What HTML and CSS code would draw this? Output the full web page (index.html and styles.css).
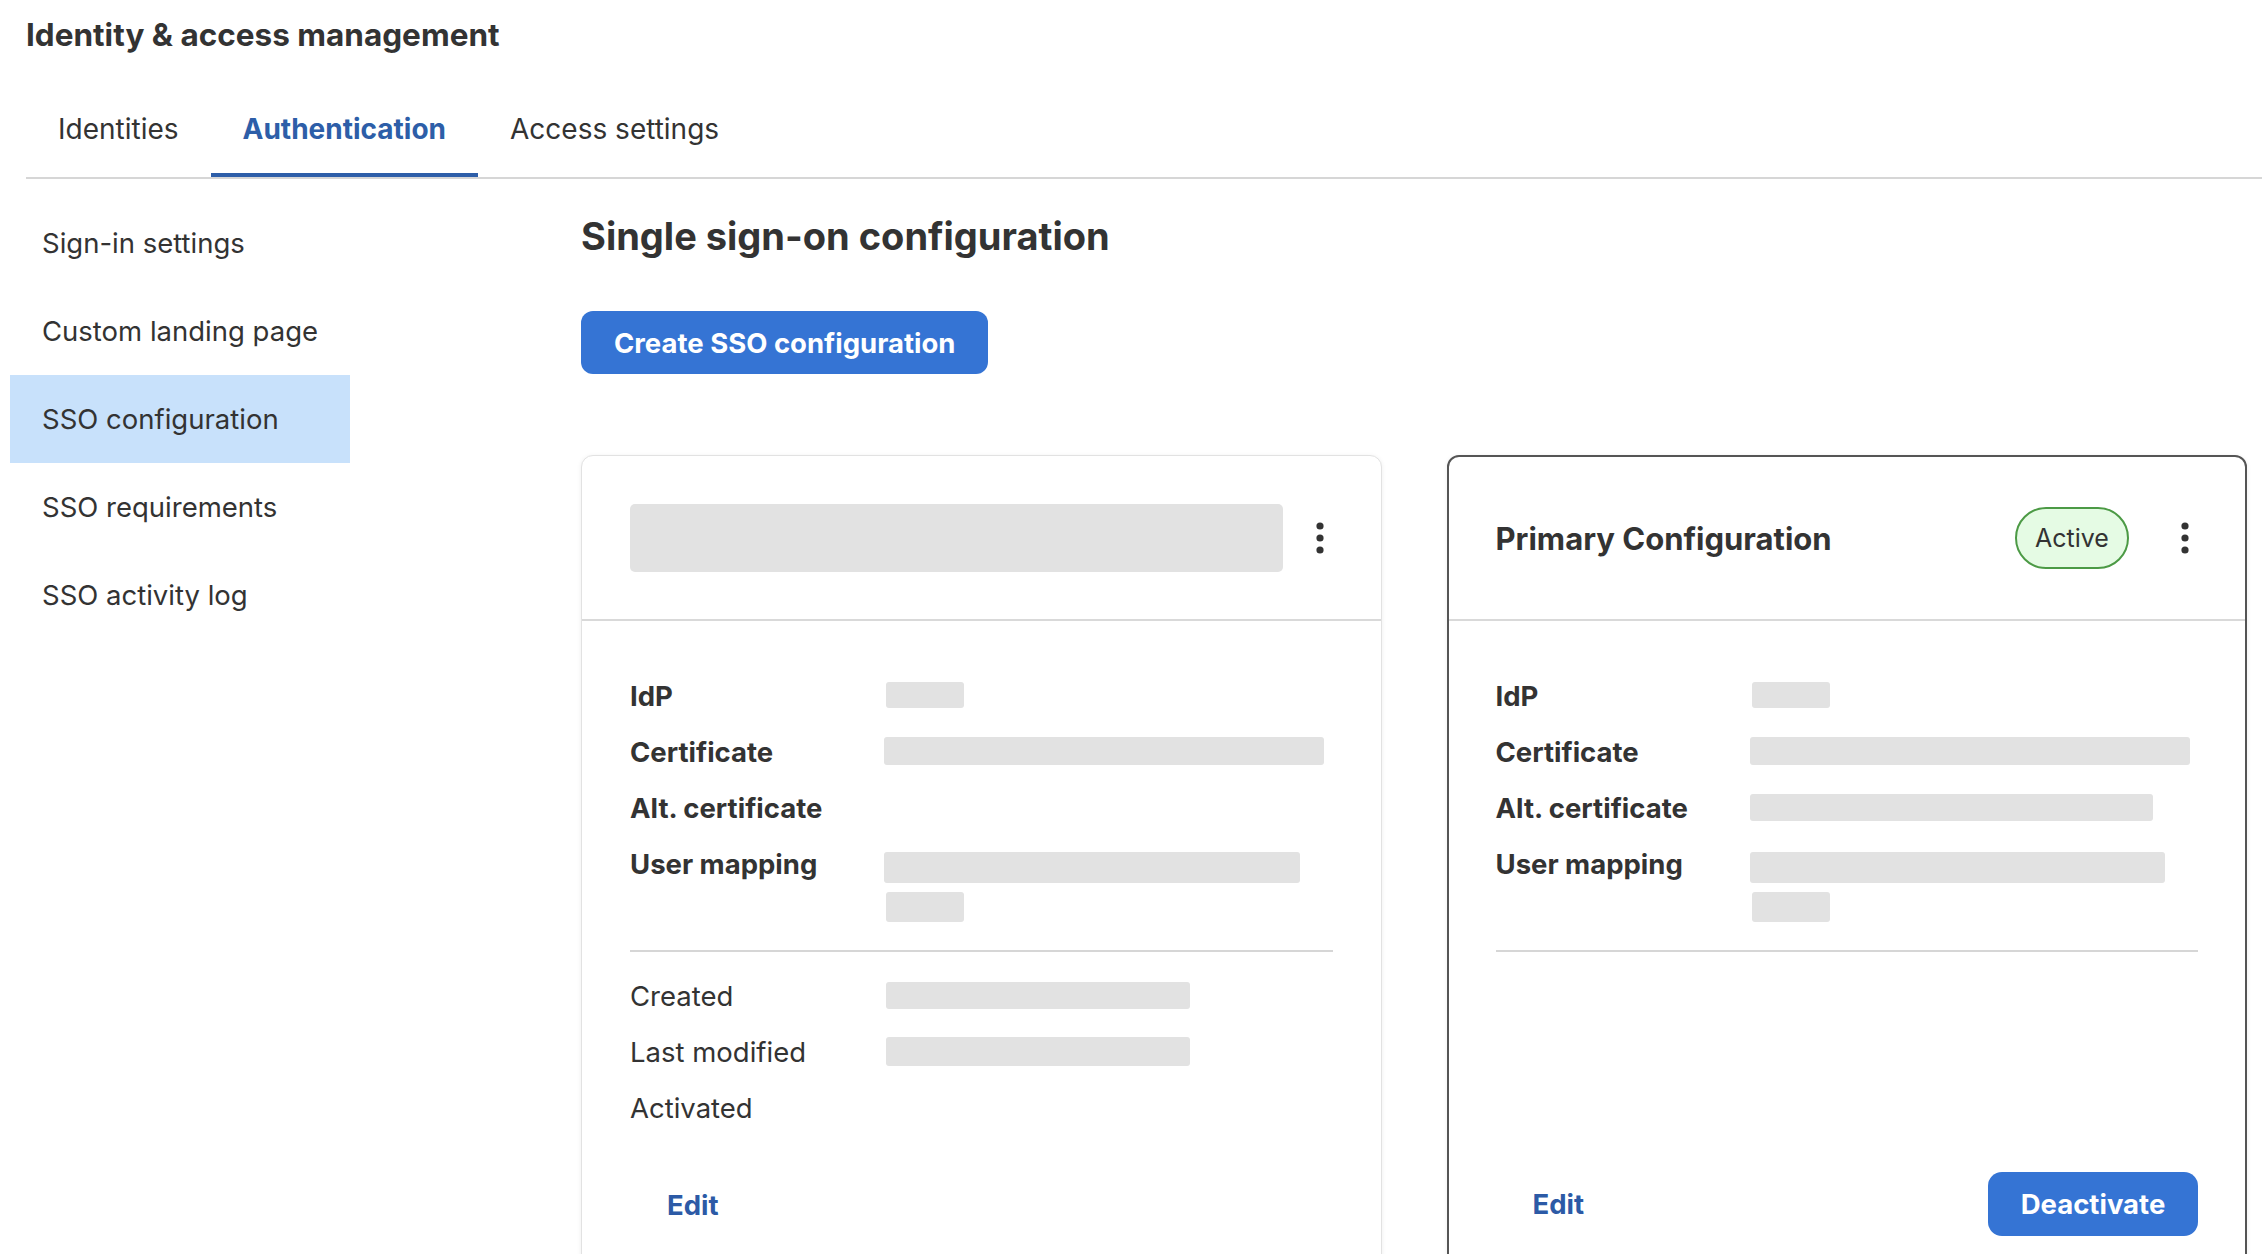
FILE: index.html
```html
<!DOCTYPE html>
<html lang="en">
<head>
    <meta charset="UTF-8">
    <title>Identity &amp; access management</title>
    <link rel="stylesheet" href="styles.css">
</head>
<body>
<div class="header">
    <h1 class="app-title">Identity &amp; access management</h1>
    <nav class="tabs">
        <a href="#" class="tab">Identities</a>
        <a href="#" class="tab active">Authentication</a>
        <a href="#" class="tab">Access settings</a>
    </nav>
</div>

<div class="layout">
    <ul class="side-nav">
        <li><a href="#">Sign-in settings</a></li>
        <li><a href="#">Custom landing page</a></li>
        <li class="current"><a href="#">SSO configuration</a></li>
        <li><a href="#">SSO requirements</a></li>
        <li><a href="#">SSO activity log</a></li>
    </ul>

    <main class="content">
        <h2 class="page-title">Single sign-on configuration</h2>
        <button class="btn btn-primary btn-create">Create SSO configuration</button>

        <div class="cards">
            <!-- loading config -->
            <section class="card">
                <div class="card-head">
                    <div class="skel skel-title"></div>
                    <button class="kebab" aria-label="More">
                        <svg width="10" height="34" viewBox="0 0 10 34"><circle cx="5" cy="5" r="3.6"/><circle cx="5" cy="17" r="3.6"/><circle cx="5" cy="29" r="3.6"/></svg>
                    </button>
                </div>
                <div class="card-body">
                    <dl class="props">
                        <dt>IdP</dt>
                        <dd><span class="skel skel-sm h26"></span></dd>
                        <dt>Certificate</dt>
                        <dd><span class="skel w440"></span></dd>
                        <dt>Alt. certificate</dt>
                        <dd></dd>
                        <dt>User mapping</dt>
                        <dd class="stack"><span class="skel w416 h31"></span><span class="skel skel-sm h30"></span></dd>
                    </dl>
                    <hr class="divider">
                    <dl class="props meta">
                        <dt>Created</dt>
                        <dd><span class="skel skel-date"></span></dd>
                        <dt>Last modified</dt>
                        <dd><span class="skel skel-date h29"></span></dd>
                        <dt>Activated</dt>
                        <dd></dd>
                    </dl>
                    <div class="card-foot">
                        <button class="btn btn-link">Edit</button>
                    </div>
                </div>
            </section>

            <!-- active config -->
            <section class="card selected">
                <div class="card-head">
                    <h3 class="card-title">Primary Configuration</h3>
                    <span class="badge">Active</span>
                    <button class="kebab" aria-label="More">
                        <svg width="10" height="34" viewBox="0 0 10 34"><circle cx="5" cy="5" r="3.6"/><circle cx="5" cy="17" r="3.6"/><circle cx="5" cy="29" r="3.6"/></svg>
                    </button>
                </div>
                <div class="card-body">
                    <dl class="props">
                        <dt>IdP</dt>
                        <dd><span class="skel skel-sm h26"></span></dd>
                        <dt>Certificate</dt>
                        <dd><span class="skel w440"></span></dd>
                        <dt>Alt. certificate</dt>
                        <dd><span class="skel w403 h27"></span></dd>
                        <dt>User mapping</dt>
                        <dd class="stack"><span class="skel w415 h31"></span><span class="skel skel-sm h30"></span></dd>
                    </dl>
                    <hr class="divider">
                    <div class="card-foot">
                        <button class="btn btn-link">Edit</button>
                        <button class="btn btn-primary btn-deactivate">Deactivate</button>
                    </div>
                </div>
            </section>
        </div>
    </main>
</div>
</body>
</html>
```

FILE: styles.css
```css
* {
    margin: 0;
    padding: 0;
    box-sizing: border-box;
}

html, body {
    height: 100%;
    overflow: hidden;
}

body {
    font-family: Inter, Roboto, "Liberation Sans", sans-serif;
    color: #333;
    background: #fff;
}

ul {
    list-style: none
}

a {
    color: inherit;
    text-decoration: none;
}

button {
    font-family: inherit;
    border: 0;
    background: none;
    cursor: pointer;
}

/* ---- header + tabs ---- */
.header {
    padding-left: 26px;
}

.app-title {
    padding-top: 15px;
    font-size: 31.5px;
    line-height: 40px;
    font-weight: 700;
    color: #333;
}

.tabs {
    display: flex;
    border-bottom: 2px solid #d6d6d6;
}

.tab {
    padding: 54px 32px 24px;
    font-size: 28px;
    line-height: 40px;
    border-bottom: 4px solid transparent;
}

.tab.active {
    color: #2d5ea8;
    font-weight: 700;
    border-bottom-color: #2d5ea8;
}

/* ---- page body ---- */
.layout {
    display: flex;
    padding-left: 10px;
}

.side-nav {
    width: 340px;
    margin-top: 20px;
    flex-shrink: 0;
}

.side-nav li a {
    display: block;
    height: 88px;
    line-height: 88px;
    padding-left: 32px;
    font-size: 27.5px;
}

.side-nav li.current a {
    background-color: #c8e1fb;
}

.content {
    flex: 1;
    margin-left: 231px;
    padding: 32px 15px 0 0;
}

.page-title {
    font-size: 38px;
    line-height: 50px;
    font-weight: 700;
}

.btn {
    font-size: 27.5px;
    font-weight: 700;
    height: 64px;
    border-radius: 13px;
}

.btn-primary {
    background-color: #3574d4;
    color: #fff;
}

.btn-create {
    display: block;
    height: 63px;
    margin-top: 50px;
    padding: 0 33px;
    border-radius: 12px;
}

.btn-link {
    color: #2c5aa6;
    padding: 0 37px;
}

.btn-deactivate {
    width: 210px;
    border-radius: 14px;
}

/* ---- cards ---- */
.cards {
    display: grid;
    grid-template-columns: 1fr 1fr;
    gap: 65px;
    margin-top: 81px;
}

.card {
    display: flex;
    flex-direction: column;
    border: 1px solid #e2e2e2;
    border-radius: 12px;
    box-shadow: 0 1px 5px rgba(0, 0, 0, 0.07);
    background: #fff;
    padding-bottom: 40px;
}

.card.selected {
    border: 2px solid #555;
}

.card-head {
    display: flex;
    align-items: center;
    height: 165px;
    padding: 0 48px;
    border-bottom: 2px solid #d9d9d9;
}

.card.selected .card-head {
    height: 164px;
    padding: 0 47px;
}

.card-title {
    font-size: 31px;
    font-weight: 700;
}

.badge {
    margin-left: auto;
    margin-right: 43px;
    width: 114px;
    height: 62px;
    line-height: 58px;
    text-align: center;
    font-size: 25px;
    border: 2px solid #4c9a45;
    border-radius: 31px;
    background-color: #e5fbe4;
}

.kebab {
    width: 26px;
    height: 40px;
    display: flex;
    align-items: center;
    justify-content: center;
    fill: #333;
}

.card-body {
    flex: 1;
    display: flex;
    flex-direction: column;
    padding: 46px 48px 0;
}

.card.selected .card-body {
    padding: 46px 47px 0;
}

.props {
    display: grid;
    grid-template-columns: 254px 1fr;
    font-size: 27.5px;
    line-height: 56px;
}

.props dt {
    font-weight: 700;
    padding-top: 3px;
    line-height: 53px;
}

.props dd {
    display: flex;
    align-items: center;
}

.props dd.stack {
    flex-direction: column;
    align-items: flex-start;
    gap: 9px;
    padding-top: 17px;
}

.props.meta {
    padding-top: 15px;
}

.props.meta dt {
    font-weight: 400;
}

.divider {
    border: 0;
    border-top: 2px solid #d6d6d6;
    margin-top: 28px;
}

.card-foot {
    display: flex;
    justify-content: space-between;
    align-items: center;
    margin-top: auto;
    padding-top: 38px;
}

/* skeleton placeholders */
.skel {
    display: block;
    height: 28px;
    background-color: #e2e2e2;
    border-radius: 3px;
}

.skel-title {
    flex: 1;
    height: 68px;
    margin-right: 24px;
    border-radius: 5px;
}

.skel-sm {
    width: 78px;
    margin-left: 2px;
}

.skel-date {
    width: 304px;
    margin-left: 2px;
    height: 27px;
}

.w440 { width: 440px; }
.w416 { width: 416px; }
.w415 { width: 415px; }
.w403 { width: 403px; }
.h26 { height: 26px; }
.h27 { height: 27px; }
.h29 { height: 29px; }
.h30 { height: 30px; }
.h31 { height: 31px; }
```
